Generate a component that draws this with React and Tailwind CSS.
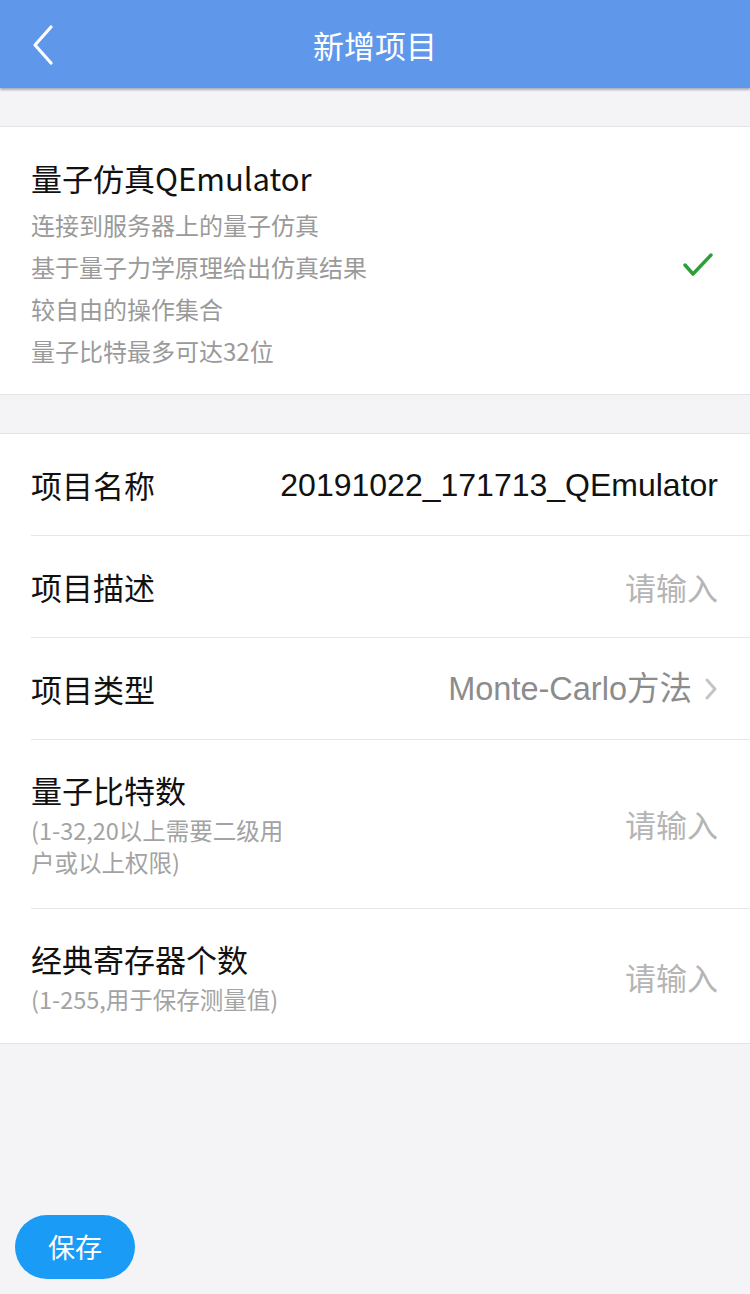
import React from 'react';

const cjk = "font-['Noto_Sans_CJK_SC',sans-serif]";
const mixed = "font-['Liberation_Sans','Noto_Sans_CJK_SC',sans-serif]";

const BackIcon = () => (
  <svg width="26" height="42" viewBox="0 0 26 42" fill="none">
    <path d="M21 3L5 21l16 18" stroke="white" strokeWidth="3.2" strokeLinecap="round" strokeLinejoin="round" />
  </svg>
);

const CheckIcon = () => (
  <svg width="32" height="26" viewBox="0 0 32 26" fill="none">
    <path d="M3 13l8 9L29 3" stroke="#2e9e3a" strokeWidth="3.4" strokeLinecap="round" strokeLinejoin="round" />
  </svg>
);

const Chevron = () => (
  <svg width="14" height="24" viewBox="0 0 14 24" fill="none">
    <path d="M3 3l8 9-8 9" stroke="#c4c4c4" strokeWidth="3" strokeLinecap="round" strokeLinejoin="round" />
  </svg>
);

const Row = ({ label, children }) => (
  <div className="ml-[31px] pr-[32px] h-[102px] flex items-center justify-between border-b border-[#e6e6e6]">
    <span className="text-[31px] text-[#111] leading-[40px]">{label}</span>
    {children}
  </div>
);

const Placeholder = () => (
  <span className="text-[31px] text-[#b5b5b5] leading-[40px]">请输入</span>
);

export default function App() {
  return (
    <div className={`w-[750px] h-[1294px] bg-[#f4f4f6] flex flex-col ${cjk}`}>
      <header className="h-[88px] bg-[#5f97eb] relative flex items-center justify-center shadow-[0_2px_2px_rgba(80,90,120,0.45)]">
        <div className="absolute left-[30px] top-[24px]">
          <BackIcon />
        </div>
        <h1 className="text-[31px] text-white leading-none">新增项目</h1>
      </header>

      <section className="mt-[38px] bg-white border-y border-[#e4e4e4] flex items-center justify-between pl-[31px] pr-[36px] pt-[30px] pb-[22px]">
        <div>
          <div className="text-[31px] text-[#111] leading-[42px] mb-[5px]">量子仿真QEmulator</div>
          <div className="text-[24px] text-[#9a9a9a] leading-[42px]">
            <div>连接到服务器上的量子仿真</div>
            <div>基于量子力学原理给出仿真结果</div>
            <div>较自由的操作集合</div>
            <div>量子比特最多可达32位</div>
          </div>
        </div>
        <CheckIcon />
      </section>

      <section className="mt-[38px] bg-white border-y border-[#e4e4e4]">
        <Row label="项目名称">
          <span className={`${mixed} text-[32px] text-[#111] leading-[40px]`}>20191022_171713_QEmulator</span>
        </Row>
        <Row label="项目描述">
          <Placeholder />
        </Row>
        <Row label="项目类型">
          <span className="flex items-center gap-[12px]">
            <span className={`${mixed} text-[32.5px] text-[#8c8c8c] leading-[40px]`}>Monte-Carlo方法</span>
            <Chevron />
          </span>
        </Row>
        <div className="ml-[31px] pr-[32px] pt-[30px] pb-[30px] flex items-center justify-between border-b border-[#e6e6e6]">
          <div>
            <div className="text-[31px] text-[#111] leading-[40px] mb-[4px]">量子比特数</div>
            <div className="text-[23.5px] text-[#a3a3a3] leading-[32px]">
              (1-32,20以上需要二级用
              <br />
              户或以上权限)
            </div>
          </div>
          <Placeholder />
        </div>
        <div className="ml-[31px] pr-[32px] pt-[30px] pb-[28px] flex items-center justify-between">
          <div>
            <div className="text-[31px] text-[#111] leading-[40px] mb-[4px]">经典寄存器个数</div>
            <div className="text-[23.5px] text-[#a3a3a3] leading-[32px]">(1-255,用于保存测量值)</div>
          </div>
          <Placeholder />
        </div>
      </section>

      <div className="mt-auto pl-[15px] pb-[15px]">
        <button className="w-[120px] h-[64px] rounded-full bg-[#1a9bf5] text-white text-[27px] flex items-center justify-center">
          保存
        </button>
      </div>
    </div>
  );
}
